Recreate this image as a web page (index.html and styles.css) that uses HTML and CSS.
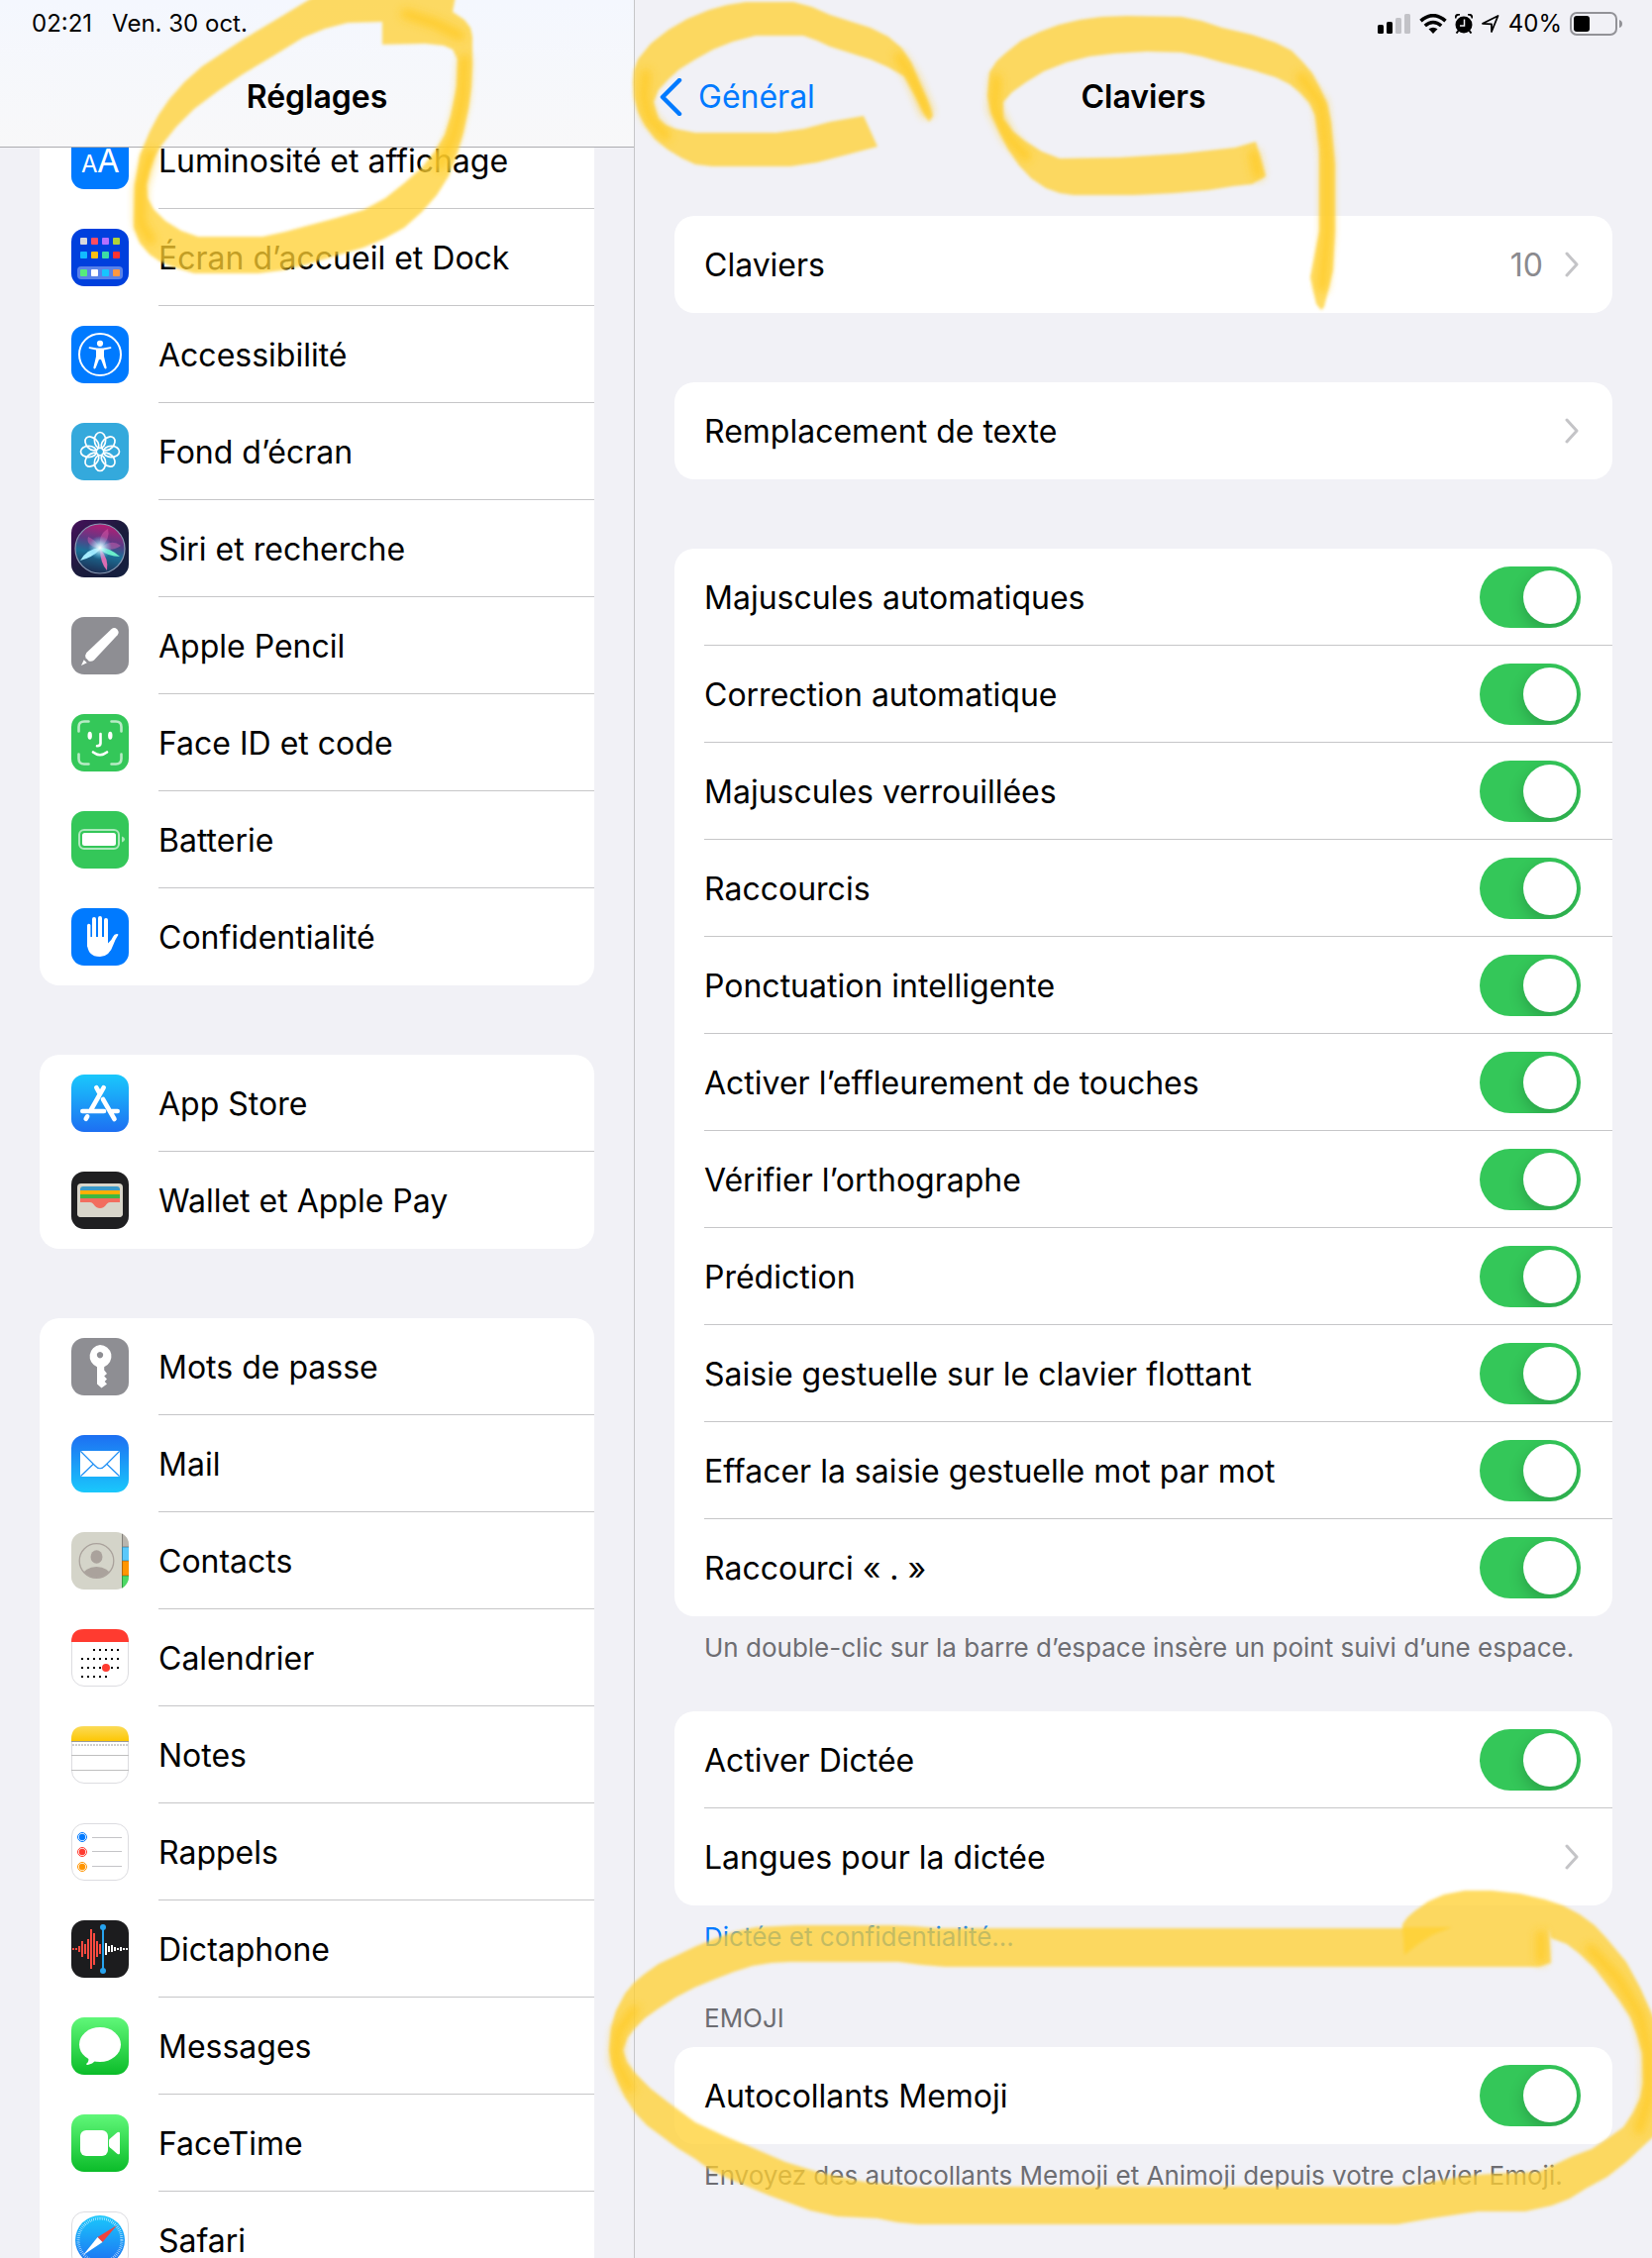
FILE: index.html
```html
<!DOCTYPE html>
<html lang="fr">
<head>
  <meta charset="UTF-8">
  <meta name="viewport" content="width=device-width, initial-scale=1.0">
  <title>Réglages - Claviers</title>
  <link rel="stylesheet" href="styles.css">
</head>
<body>
  <div class="app">
    <!-- Sidebar -->
    <aside class="sidebar">
      <header class="bar sidebar-bar">
        <div class="status">
          <span>02:21</span>
          <span>Ven. 30 oct.</span>
        </div>
        <div class="nav">
          <h1 class="title">Réglages</h1>
        </div>
      </header>

      <nav class="menu">
        <ul class="card">
          <li><a class="item" href="#">
            <svg class="icon" viewBox="0 0 58 58"><rect width="58" height="58" rx="13" fill="#007aff"/><text class="aa" x="10" y="41" font-size="24">A</text><text class="aa" x="26" y="41" font-size="33">A</text></svg>
            <span class="label">Luminosité et affichage</span></a></li>
          <li><a class="item" href="#">
            <svg class="icon" viewBox="0 0 58 58"><rect width="58" height="58" rx="13" fill="#0040dd"/><rect x="6" y="38" width="46" height="13" rx="4" fill="#fff" opacity=".35"/>
              <rect x="9" y="9" width="7" height="7" rx="1" fill="#d9d9dc"/><rect x="20" y="9" width="7" height="7" rx="1" fill="#ff4d61"/><rect x="31" y="9" width="7" height="7" rx="1" fill="#b570ff"/><rect x="42" y="9" width="7" height="7" rx="1" fill="#b0d239"/>
              <rect x="9" y="23" width="7" height="7" rx="1" fill="#12baff"/><rect x="20" y="23" width="7" height="7" rx="1" fill="#ffbf12"/><rect x="31" y="23" width="7" height="7" rx="1" fill="#3ddba5"/><rect x="42" y="23" width="7" height="7" rx="1" fill="#ff3333"/>
              <rect x="9" y="41" width="7" height="7" rx="1" fill="#56ec7c"/><rect x="20" y="41" width="7" height="7" rx="1" fill="#fff"/><rect x="31" y="41" width="7" height="7" rx="1" fill="#17c5ff"/><rect x="42" y="41" width="7" height="7" rx="1" fill="#ff9841"/></svg>
            <span class="label">Écran d’accueil et Dock</span></a></li>
          <li><a class="item" href="#">
            <svg class="icon" viewBox="0 0 58 58"><rect width="58" height="58" rx="13" fill="#007aff"/><circle cx="29" cy="29" r="21" fill="none" stroke="#fff" stroke-width="2"/><circle cx="29" cy="17.8" r="3.1" fill="#fff"/><path d="M18.6 21.2 26 22.4q3 .4 6 0l7.400-1.200q1 .1 1 .9t-.8 1l-6.600 1.300v6.600l2.600 11q.1 1.200-.8 1.400t-1.500-.8L30 34h-2l-3.300 8.600q-.6 1-1.500.8t-.8-1.400l2.600-11v-6.600l-6.600-1.300q-.8-.2-.8-1t1-.9z" fill="#fff"/></svg>
            <span class="label">Accessibilité</span></a></li>
          <li><a class="item" href="#">
            <svg class="icon" viewBox="0 0 58 58"><rect width="58" height="58" rx="13" fill="#34a9dc"/>
              <g fill="none" stroke="#fff" stroke-width="1.700"><ellipse cx="29" cy="17.500" rx="5.600" ry="8"/><ellipse cx="29" cy="17.500" rx="5.600" ry="8" transform="rotate(45 29 29)"/><ellipse cx="29" cy="17.500" rx="5.600" ry="8" transform="rotate(90 29 29)"/><ellipse cx="29" cy="17.500" rx="5.600" ry="8" transform="rotate(135 29 29)"/><ellipse cx="29" cy="17.500" rx="5.600" ry="8" transform="rotate(180 29 29)"/><ellipse cx="29" cy="17.500" rx="5.600" ry="8" transform="rotate(225 29 29)"/><ellipse cx="29" cy="17.500" rx="5.600" ry="8" transform="rotate(270 29 29)"/><ellipse cx="29" cy="17.500" rx="5.600" ry="8" transform="rotate(315 29 29)"/></g></svg>
            <span class="label">Fond d’écran</span></a></li>
          <li><a class="item" href="#">
            <svg class="icon" viewBox="0 0 58 58">
              <defs>
                <linearGradient id="siriBg" x1="0" y1="0" x2="1" y2="1"><stop offset="0" stop-color="#47105c"/><stop offset=".5" stop-color="#1b1b3c"/><stop offset="1" stop-color="#13203f"/></linearGradient>
                <linearGradient id="siriBall" x1=".6" y1="0" x2=".4" y2="1"><stop offset="0" stop-color="#b81c74"/><stop offset=".35" stop-color="#5c3a86"/><stop offset=".6" stop-color="#1b6f96"/><stop offset="1" stop-color="#1c2a50"/></linearGradient>
                <radialGradient id="siriGlow"><stop offset="0" stop-color="#fff"/><stop offset=".3" stop-color="#c8f4ff" stop-opacity=".8"/><stop offset="1" stop-color="#58c8f0" stop-opacity="0"/></radialGradient>
              </defs>
              <rect width="58" height="58" rx="13" fill="url(#siriBg)"/><circle cx="29" cy="29" r="25" fill="url(#siriBall)" stroke="#8a9bb5" stroke-width="1.200"/>
              <path d="M29 29Q14 26 17 17q8 3 12 12zM29 29Q27 14 37 9q3 10-8 20zM29 29Q40 18 50 26q-8 6-21 3z" fill="#f068b8" opacity=".4"/>
              <path d="M29 28Q16 29 9 41q12-3 20-11z" fill="#a5ecff"/><path d="M29 28q10 0 20 9-12 0-20-7z" fill="#6aeecb"/><path d="M29 29q9 10 7 22-7-8-7-22z" fill="#f070b8" opacity=".9"/>
              <circle cx="29" cy="28" r="12" fill="url(#siriGlow)"/></svg>
            <span class="label">Siri et recherche</span></a></li>
          <li><a class="item" href="#">
            <svg class="icon" viewBox="0 0 58 58"><rect width="58" height="58" rx="13" fill="#8e8e93"/><path d="M40.500 12.200q3-2.300 5.800.3 2.600 2.900.3 5.800L23 43.500q-2.800 2-5.300.9l-3.100-3.100q-1.200-2.500.8-5.300z" fill="#fff"/><path d="M12.700 43.300 10 49l5.800-2.700z" fill="#fff"/></svg>
            <span class="label">Apple Pencil</span></a></li>
          <li><a class="item" href="#">
            <svg class="icon" viewBox="0 0 58 58"><rect width="58" height="58" rx="13" fill="#34c759"/><g fill="none" stroke="#fff" stroke-linecap="round"><path d="M7.500 17.500V13q0-5.500 5.500-5.500h4.500M40.500 7.500H45q5.500 0 5.500 5.500v4.500M50.500 40.500V45q0 5.500-5.500 5.500h-4.500M17.500 50.500H13q-5.500 0-5.500-5.500v-4.500" stroke-width="2.600" opacity=".65"/><path d="M29.500 20v9.500q0 2.700-3.500 2.700M22 38.500q7 5.500 14 0" stroke-width="2.600"/></g><ellipse cx="18.700" cy="21.800" rx="2.200" ry="4" fill="#fff"/><ellipse cx="39.300" cy="21.800" rx="2.200" ry="4" fill="#fff"/></svg>
            <span class="label">Face ID et code</span></a></li>
          <li><a class="item" href="#">
            <svg class="icon" viewBox="0 0 58 58"><rect width="58" height="58" rx="13" fill="#34c759"/><rect x="8" y="19" width="40" height="19" rx="5" fill="none" stroke="#fff" stroke-width="2" opacity=".6"/><rect x="11" y="22" width="34" height="13" rx="2.500" fill="#fff"/><path d="M51 25.500q3 .8 3 3t-3 3z" fill="#fff" opacity=".6"/></svg>
            <span class="label">Batterie</span></a></li>
          <li><a class="item" href="#">
            <svg class="icon" viewBox="0 0 58 58"><rect width="58" height="58" rx="13" fill="#007aff"/><g stroke="#fff" stroke-width="4" stroke-linecap="round"><path d="M17.700 17.500V38" stroke-width="3.400"/><path d="M23 11v24M29 10v24M35 12v24"/></g><path d="M16 29h21v6.500q4-3.500 5-6.500 1.800-3.600 5.200-2.700.6.600-.4 1.800-2.300 3.400-4.200 8.400Q38.500 49 29 49q-13 0-13-14z" fill="#fff"/></svg>
            <span class="label">Confidentialité</span></a></li>
        </ul>

        <ul class="card">
          <li><a class="item" href="#">
            <svg class="icon" viewBox="0 0 58 58"><defs><linearGradient id="blueDown" x1="0" y1="0" x2="0" y2="1"><stop offset="0" stop-color="#1ac8fc"/><stop offset="1" stop-color="#1d6ff2"/></linearGradient></defs><rect width="58" height="58" rx="13" fill="url(#blueDown)"/><g stroke="#fff" stroke-width="4.600" stroke-linecap="round" fill="none"><path d="M32.700 13.200 20 35.500M25.300 13.200l3 5.300M32 25l11.500 20M11.300 37H33M41 37h5.700M16.200 42.300l-1.500 2.500"/></g></svg>
            <span class="label">App Store</span></a></li>
          <li><a class="item" href="#">
            <svg class="icon" viewBox="0 0 58 58"><rect width="58" height="58" rx="13" fill="#1f1f21"/><rect x="6" y="12" width="46" height="34" rx="4" fill="#d8d5ca"/><path d="M9 22v-4q0-3 3-3h34q3 0 3 3v4z" fill="#3b99c9"/><path d="M9 19h40v5H9z" fill="#ffb003"/><path d="M9 23h40v5H9z" fill="#40b740"/><path d="M9 27h40v11H9z" fill="#f26d5f"/><path d="M6 31h13q2 0 3.500 2 2.500 4 6.500 4t6.500-4q1.500-2 3.500-2h13v11q0 4-4 4H10q-4 0-4-4z" fill="#d8d5ca"/></svg>
            <span class="label">Wallet et Apple Pay</span></a></li>
        </ul>

        <ul class="card">
          <li><a class="item" href="#">
            <svg class="icon" viewBox="0 0 58 58"><rect width="58" height="58" rx="13" fill="#8e8e93"/><path fill-rule="evenodd" d="M29 7a11.500 11.500 0 0 1 4.200 22.200v3.300l2.800 3.500-2.800 2.500 2.800 3-2.300 2.500 2.300 2.500-5.500 4-4.500-4V29.200A11.500 11.500 0 0 1 29 7zm0 7a3.200 3.200 0 1 0 .01 0z" fill="#fff"/></svg>
            <span class="label">Mots de passe</span></a></li>
          <li><a class="item" href="#">
            <svg class="icon" viewBox="0 0 58 58"><defs><linearGradient id="blueUp" x1="0" y1="0" x2="0" y2="1"><stop offset="0" stop-color="#1d6ff2"/><stop offset="1" stop-color="#1ac8fc"/></linearGradient></defs><rect width="58" height="58" rx="13" fill="url(#blueUp)"/><rect x="9" y="16" width="40" height="26" rx="1.500" fill="#fff"/><path d="M9.500 16.500 24 31q5 5.500 10 0l14.500-14.500M9.500 41.500 22 29.500M48.500 41.500 36 29.500" fill="none" stroke="#1e8ff5" stroke-width="1.200"/></svg>
            <span class="label">Mail</span></a></li>
          <li><a class="item" href="#">
            <svg class="icon" viewBox="0 0 58 58"><defs><clipPath id="tile"><rect width="58" height="58" rx="13"/></clipPath><clipPath id="face"><circle cx="25.500" cy="29" r="17"/></clipPath></defs><g clip-path="url(#tile)"><path fill="#d4d4c9" d="M0 0h58v58H0z"/><path fill="#b9b5ae" d="M51 0h7v15h-7z"/><path fill="#5ac8fa" d="M51 15h7v14h-7z"/><path fill="#ff9500" d="M51 29h7v15h-7z"/><path fill="#4cd964" d="M51 44h7v14h-7z"/><path d="M51.500 0v58M51 15h7M51 29h7M51 44h7" stroke="#000" opacity=".3"/></g><circle cx="25.500" cy="29" r="17.300" fill="none" stroke="#aaa29c" stroke-width="1.300"/><g fill="#aaa29c"><ellipse cx="25.500" cy="25" rx="6" ry="6.700"/><ellipse cx="25.500" cy="44" rx="14" ry="9" clip-path="url(#face)"/></g></svg>
            <span class="label">Contacts</span></a></li>
          <li><a class="item" href="#">
            <svg class="icon" viewBox="0 0 58 58"><rect x=".5" y=".5" width="57" height="57" rx="12.500" fill="#fff" stroke="#dcdce0"/><path d="M0 13Q0 0 13 0h32q13 0 13 13z" fill="#ff3b30"/><path d="M22 21h26M10 30h38M10 39h38M10 48h26" stroke="#000" stroke-width="2" stroke-dasharray="2 4"/><circle cx="35" cy="39" r="4" fill="#ff3b30"/></svg>
            <span class="label">Calendrier</span></a></li>
          <li><a class="item" href="#">
            <svg class="icon" viewBox="0 0 58 58"><defs><linearGradient id="noteTop" x1="0" y1="0" x2="0" y2="1"><stop offset="0" stop-color="#fbdb57"/><stop offset="1" stop-color="#fdc704"/></linearGradient></defs><rect x=".5" y=".5" width="57" height="57" rx="12.500" fill="#fff" stroke="#dcdce0"/><path d="M0 15v-2Q0 0 13 0h32q13 0 13 13v2z" fill="url(#noteTop)"/><path d="M0 15.500h58" stroke="#9a9a9a"/><path d="M1 19h56" stroke="#cfcfcf" stroke-width="2" stroke-dasharray="2 1"/><path d="M0 29.500h58M0 44.500h58" stroke="#bfbfbf"/></svg>
            <span class="label">Notes</span></a></li>
          <li><a class="item" href="#">
            <svg class="icon" viewBox="0 0 58 58"><rect x=".5" y=".5" width="57" height="57" rx="12.500" fill="#fff" stroke="#dcdce0"/><g fill="none"><circle cx="11" cy="14" r="4.500" stroke="#007aff"/><circle cx="11" cy="29" r="4.500" stroke="#ff3b30"/><circle cx="11" cy="44" r="4.500" stroke="#ff9500"/></g><circle cx="11" cy="14" r="3.200" fill="#007aff"/><circle cx="11" cy="29" r="3.200" fill="#ff3b30"/><circle cx="11" cy="44" r="3.200" fill="#ff9500"/><path d="M21 14.500h30M21 28.500h30M21 43.500h30" stroke="#c4c4c7"/></svg>
            <span class="label">Rappels</span></a></li>
          <li><a class="item" href="#">
            <svg class="icon" viewBox="0 0 58 58"><rect width="58" height="58" rx="13" fill="#1c1c1e"/><g stroke-width="2"><path d="M2 28v2M5 28v2M8 26v6M11 21v16M14 24v10M17 19v20M20 9v40M23 13v32M26 21v16M29 24v10" stroke="#ff4a40"/><path d="M35 23v12M38 26v6M41 25v7M44 27v4M47 28v2M50 27v4M53 28v2M56 28v2" stroke="#fff"/><path d="M32 7v44" stroke="#27a3ee"/></g><circle cx="32" cy="7" r="3" fill="#27a3ee"/><circle cx="32" cy="51" r="3" fill="#27a3ee"/></svg>
            <span class="label">Dictaphone</span></a></li>
          <li><a class="item" href="#">
            <svg class="icon" viewBox="0 0 58 58"><defs><linearGradient id="green" x1="0" y1="0" x2="0" y2="1"><stop offset="0" stop-color="#60f779"/><stop offset="1" stop-color="#0bbc29"/></linearGradient></defs><rect width="58" height="58" rx="13" fill="url(#green)"/><ellipse cx="29" cy="27.500" rx="21" ry="17.500" fill="#fff"/><path d="M17 40q1.500 4.500-2 7 .2 1 1.500.9 5-.8 8-4.400z" fill="#fff"/></svg>
            <span class="label">Messages</span></a></li>
          <li><a class="item" href="#">
            <svg class="icon" viewBox="0 0 58 58"><rect width="58" height="58" rx="13" fill="url(#green)"/><rect x="9" y="16" width="28" height="26" rx="6" fill="#fff"/><path d="M38 26.500q0-1 .8-1.700l7.500-6.500q2.700-1.500 2.700 1v19.400q0 2.500-2.700 1l-7.500-6.500q-.8-.7-.8-1.700z" fill="#fff"/></svg>
            <span class="label">FaceTime</span></a></li>
          <li><a class="item" href="#">
            <svg class="icon" viewBox="0 0 58 58"><rect x=".5" y=".5" width="57" height="57" rx="12.500" fill="#fff" stroke="#dcdce0"/><circle cx="29" cy="29" r="25" fill="url(#blueDown)"/><circle cx="29" cy="29" r="22" fill="none" stroke="#fff" stroke-width="3" stroke-dasharray=".6 1.320" opacity=".8"/><path d="M46 14 26.500 26l5 5z" fill="#f0423c"/><path d="M12 44l14.500-18 5 5z" fill="#fff"/></svg>
            <span class="label">Safari</span></a></li>
        </ul>
      </nav>
    </aside>

    <!-- Detail pane -->
    <main class="detail">
      <header class="bar">
        <div class="status status-right">
          <svg class="signal" viewBox="0 0 34 20"><g><rect y="11" width="6" height="9" rx="1.500"/><rect x="9" y="8" width="6" height="12" rx="1.500"/><rect x="18" y="4" width="6" height="16" rx="1.500" fill="#c2c2c7"/><rect x="27" width="6" height="20" rx="1.500" fill="#c2c2c7"/></g></svg>
          <svg class="wifi" viewBox="0 0 28 20"><g fill="none" stroke="#000" stroke-width="3.600"><path d="M1.500 7.200q12.500-11 25 0M5.800 12q8.200-7 16.400 0"/></g><path d="M9.500 15.300q4.500-3 9 0L14 20z"/></svg>
          <svg class="alarm" viewBox="0 0 18 20"><circle cx="9" cy="11" r="8.500"/><path d="M.5 4.500q0-4 4.500-4M17.500 4.500q0-4-4.500-4M3.500 17l-2 2.500M14.500 17l2 2.500" stroke="#000" stroke-width="2" fill="none"/><path d="M9.500 5.500V12H5" stroke="#f1f1f6" stroke-width="1.500" fill="none"/></svg>
          <svg class="arrow" viewBox="0 0 20 20"><path d="M2 9.800 17.500 2 11 18V10.300z" fill="none" stroke="#000" stroke-width="1.800" stroke-linejoin="round"/></svg>
          <span class="percent">40%</span>
          <svg class="battery" viewBox="0 0 54 24"><rect x="1" y="1" width="46" height="22" rx="6" fill="none" stroke="#929297" stroke-width="2"/><rect x="4" y="4" width="16" height="16" rx="3"/><path d="M50 8q3 1 3 4t-3 4z" fill="#929297"/></svg>
        </div>
        <div class="nav">
          <a class="back" href="#"><svg class="back-icon" viewBox="0 0 24 38"><path d="M21 2 4 19l17 17" fill="none" stroke="#007aff" stroke-width="4.500" stroke-linecap="round" stroke-linejoin="round"/></svg>Général</a>
          <h2 class="title">Claviers</h2>
        </div>
      </header>

      <div class="content">
        <section class="group">
          <ul class="card">
            <li><a class="row" href="#"><span class="label">Claviers</span><span class="value">10</span><svg class="chevron" viewBox="0 0 16 26"><path d="M2 2l10 11L2 24"/></svg></a></li>
          </ul>
        </section>

        <section class="group">
          <ul class="card">
            <li><a class="row" href="#"><span class="label">Remplacement de texte</span><svg class="chevron" viewBox="0 0 16 26"><path d="M2 2l10 11L2 24"/></svg></a></li>
          </ul>
        </section>

        <section class="group">
          <ul class="card">
            <li><label class="row"><span class="label">Majuscules automatiques</span><input class="switch" type="checkbox" checked></label></li>
            <li><label class="row"><span class="label">Correction automatique</span><input class="switch" type="checkbox" checked></label></li>
            <li><label class="row"><span class="label">Majuscules verrouillées</span><input class="switch" type="checkbox" checked></label></li>
            <li><label class="row"><span class="label">Raccourcis</span><input class="switch" type="checkbox" checked></label></li>
            <li><label class="row"><span class="label">Ponctuation intelligente</span><input class="switch" type="checkbox" checked></label></li>
            <li><label class="row"><span class="label">Activer l’effleurement de touches</span><input class="switch" type="checkbox" checked></label></li>
            <li><label class="row"><span class="label">Vérifier l’orthographe</span><input class="switch" type="checkbox" checked></label></li>
            <li><label class="row"><span class="label">Prédiction</span><input class="switch" type="checkbox" checked></label></li>
            <li><label class="row"><span class="label">Saisie gestuelle sur le clavier flottant</span><input class="switch" type="checkbox" checked></label></li>
            <li><label class="row"><span class="label">Effacer la saisie gestuelle mot par mot</span><input class="switch" type="checkbox" checked></label></li>
            <li><label class="row"><span class="label">Raccourci « . »</span><input class="switch" type="checkbox" checked></label></li>
          </ul>
          <p class="note">Un double-clic sur la barre d’espace insère un point suivi d’une espace.</p>
        </section>

        <section class="group">
          <ul class="card">
            <li><label class="row"><span class="label">Activer Dictée</span><input class="switch" type="checkbox" checked></label></li>
            <li><a class="row" href="#"><span class="label">Langues pour la dictée</span><svg class="chevron" viewBox="0 0 16 26"><path d="M2 2l10 11L2 24"/></svg></a></li>
          </ul>
          <p class="note"><a class="note-link" href="#">Dictée et confidentialité…</a></p>
        </section>

        <section class="group">
          <h3 class="heading">EMOJI</h3>
          <ul class="card">
            <li><label class="row"><span class="label">Autocollants Memoji</span><input class="switch" type="checkbox" checked></label></li>
          </ul>
          <p class="note">Envoyez des autocollants Memoji et Animoji depuis votre clavier Emoji.</p>
        </section>
      </div>
    </main>

    <!-- Highlighter marks over the page -->
    <svg class="marks" viewBox="0 0 1668 2280" preserveAspectRatio="xMinYMin meet" aria-hidden="true">
      <defs>
        <filter id="soft" x="-5%" y="-5%" width="110%" height="110%"><feGaussianBlur stdDeviation="1.500"/></filter>
        <filter id="ink" x="-30%" y="-10%" width="160%" height="120%"><feGaussianBlur stdDeviation="4"/></filter>
      </defs>
      <g fill="#ffd030" fill-opacity=".76" stroke-linejoin="round" filter="url(#soft)">
        <path d="M318 -4 285 16 245 40 204 67 186 83 171 100 160 116 151 133 141 157 136 187 135 230 141 245 151 257 163 265 176 270 196 276H261L285 273 310 267 340 258 367 250 388 241 408 230 426 214 441 197 453 178 461 157 468 134 473 110 476 88 477 67V37L475 28 469 20 457 12 460 -4zM386 22 386 45 429 44 448 46 457 50 462 60 461 87 455 117 449 136 439 153 425 170 408 185 389 200 367 212 340 220 310 228 288 234 265 239H200L183 233 167 223 155 211 149 200 148 186 151 173 156 159 163 147 178 128 196 110 220 92 245 75 275 57 306 38 328 29 351 23z"/>
        <path d="M872 117 886 148 852 157 825 164 798 168H719L702 166 689 160 674 151 661 140 651 127 644 113 640 98 639 83 640 71 644 60 657 44 675 30 694 19 716 10 734 5 753 2H801L820 7 838 15 860 22 879 28 897 37 910 48 920 63 927 80 936 100 942 117 938 123 934 117 924 97 913 77 897 68 879 60 860 54 838 47 825 41 811 36H763L740 42 720 50 702 60 686 70 675 80 665 91 660 103 665 120 672 126 682 130 702 134H784L812 130 838 123z"/>
        <path d="M1268 143 1278 178 1264 186 1245 188 1220 192 1185 195 1145 197H1084L1070 195 1056 190 1041 180 1029 167 1018 151 1009 133 1001 115 997 97 999 73 1006 62 1016 53 1031 41 1050 32 1069 25 1090 20 1112 17 1138 16 1193 17 1213 21 1234 28 1264 35 1288 43 1304 51 1315 62 1325 74 1332 87 1340 105 1344 123 1348 167V233L1346 273 1337 310 1334 313 1329 307 1323 280 1332 233V150L1328 117 1322 104 1312 93 1302 85 1288 78 1262 70 1234 63 1213 57 1193 53 1158 52 1125 54 1100 57 1077 63 1054 72 1036 83 1022 93 1013 103V120L1023 133 1036 143 1052 153 1070 160 1131 159 1193 155 1247 149z"/>
        <path d="M1564 1947 1566 1982 1554 1986H954L930 1984 907 1981H798L779 1982 760 1985 741 1991 723 1998 701 2007 682 2017 665 2028 651 2038 641 2048 634 2057 629 2070 633 2082 641 2093 657 2109 675 2123 702 2143 732 2157 763 2170 793 2183 825 2193 872 2203 920 2208H1411L1432 2206 1452 2202 1479 2197 1506 2195 1554 2193 1588 2177 1607 2170 1622 2160 1639 2148 1649 2133 1656 2118 1659 2103 1658 2073 1653 2055 1646 2037 1635 2020 1622 2003 1610 1987 1595 1973 1582 1963 1566 1957 1564 1947 1416 1947V1943L1421 1936 1428 1930 1442 1920 1458 1913 1479 1909H1506L1534 1912 1560 1918 1578 1924 1595 1933 1610 1944 1622 1957 1642 1981 1656 2007 1664 2025 1672 2043V2155L1642 2183 1623 2198 1601 2210 1585 2220 1567 2227 1540 2233H1492L1445 2240 1411 2246H927L906 2244 886 2240 845 2238 818 2232 777 2217 736 2200 717 2191 702 2180 684 2169 668 2157 653 2146 641 2133 631 2118 624 2103 618 2087 615 2070 617 2047 622 2030 631 2013 640 2002 651 1993 665 1983 682 1975 703 1965 723 1957 743 1950 763 1946 804 1944H900L924 1945 947 1947z"/>
        <path d="M1416 1946H1466L1446 1954 1432 1963 1418 1974z"/>
      </g>
      <!-- denser ink where the strokes get thin or overlap -->
      <g fill="none" stroke="#ffca24" stroke-width="11" stroke-linecap="round" stroke-linejoin="round" opacity=".75" filter="url(#ink)">
        <path d="M152 155 142 190 142 225 152 242M469 60 467 100 458 137 444 167M410 14 440 24 464 36"/>
        <path d="M652 75 650 98 655 118 672 137M908 58 921 78 936 113"/>
        <path d="M1006 80 1004 110 1018 138 1036 158M1314 78 1334 105 1340 160 1340 235 1335 290M1266 156 1270 176"/>
        <path d="M640 2030 624 2052 622 2080 636 2108M1606 1968 1634 1998 1656 2035 1665 2075 1664 2120 1655 2150M1556 1954V1978"/>
      </g>
    </svg>
  </div>
</body>
</html>
```
FILE: styles.css
```css
* {
  box-sizing: border-box;
}
body {
  margin: 0;
  font-family: Inter, "Liberation Sans", sans-serif;
  font-size: 32px;
  line-height: 40px;
  color: #000;
  background: #f1f1f6;
}
h1, h2, h3, p, ul {
  margin: 0;
  padding: 0;
}
ul {
  list-style: none;
}
a {
  color: inherit;
  text-decoration: none;
}
svg {
  display: block;
  flex: none;
}
.app {
  position: relative;
  display: grid;
  grid-template-columns: 641px 1fr;
  height: 100vh;
  overflow: hidden;
}

/* Top bars */
.bar {
  width: 100%;
}
.status {
  display: flex;
  align-items: center;
  gap: 20px;
  height: 48px;
  padding-left: 32px;
  font-size: 24px;
}
.nav {
  position: relative;
  display: flex;
  align-items: center;
  justify-content: center;
  height: 100px;
}
.title {
  font-size: 32px;
  font-weight: 600;
}

/* Sidebar */
.sidebar {
  position: relative;
  border-right: 1px solid #c6c6c8;
  overflow: hidden;
}
.sidebar-bar {
  position: absolute;
  top: 0;
  left: 0;
  z-index: 1;
  background: linear-gradient(#f4f7fe, #f8f8f9);
  border-bottom: 1px solid #acacb0;
}
.menu {
  display: flex;
  flex-direction: column;
  gap: 70px;
  padding: 113px 40px 0;
}
.card {
  background: #fff;
  border-radius: 20px;
  overflow: hidden;
}
.item {
  display: flex;
  align-items: center;
  gap: 30px;
  height: 98px;
  padding-left: 32px;
}
.icon {
  width: 58px;
  height: 58px;
}
.aa {
  font-family: Inter, sans-serif;
  fill: #fff;
}
.item .label {
  flex: 1;
  padding-top: 2px;
  line-height: 95px;
  border-bottom: 1px solid #c6c6c8;
}
.card li:last-child .label {
  border-bottom-color: transparent;
}

/* Detail pane */
.status-right {
  justify-content: flex-end;
  gap: 8px;
  padding: 0 29px 0 0;
}
.signal {
  width: 34px;
  height: 20px;
}
.wifi {
  width: 28px;
  height: 20px;
}
.alarm {
  width: 18px;
  height: 20px;
}
.arrow {
  width: 20px;
  height: 20px;
}
.battery {
  width: 54px;
  height: 24px;
}
.back {
  position: absolute;
  left: 24px;
  display: flex;
  align-items: center;
  gap: 16px;
  color: #007aff;
}
.back-icon {
  width: 24px;
  height: 38px;
}
.content {
  padding: 70px 40px 0;
}
.group {
  margin-bottom: 70px;
}
.group:has(.note) {
  margin-bottom: 48px;
}
.row {
  display: flex;
  align-items: center;
  height: 98px;
  margin-left: 30px;
  padding-right: 32px;
  border-bottom: 1px solid #c6c6c8;
}
.row .label, .value {
  padding-top: 2px;
}
.row .label {
  flex: 1;
}
.card li:last-child .row {
  border-bottom-color: transparent;
}
.value {
  margin-right: 22px;
  color: #8a8a8e;
}
.chevron {
  width: 16px;
  height: 26px;
  fill: none;
  stroke: #c4c4c7;
  stroke-width: 3;
  stroke-linecap: round;
  stroke-linejoin: round;
}
.switch {
  appearance: none;
  position: relative;
  width: 102px;
  height: 62px;
  margin: 0;
  border-radius: 31px;
  background: #e9e9ea;
  overflow: hidden;
}
.switch::before {
  content: "";
  position: absolute;
  top: 4px;
  left: 4px;
  width: 54px;
  height: 54px;
  border-radius: 50%;
  background: #fff;
  box-shadow: 0 6px 16px rgba(0, 0, 0, 0.2);
}
.switch:checked {
  background: #34c759;
}
.switch:checked::before {
  left: 44px;
}
.heading, .note {
  padding: 0 30px;
  font-size: 26px;
  font-weight: 400;
  line-height: 32px;
  color: #6d6d72;
}
.heading {
  padding-top: 2px;
  padding-bottom: 13px;
}
.note {
  padding-top: 16px;
}
.note-link {
  color: #007aff;
}

.marks {
  position: absolute;
  top: 0;
  left: 0;
  z-index: 2;
  width: 100%;
  height: 100%;
  pointer-events: none;
}
```
